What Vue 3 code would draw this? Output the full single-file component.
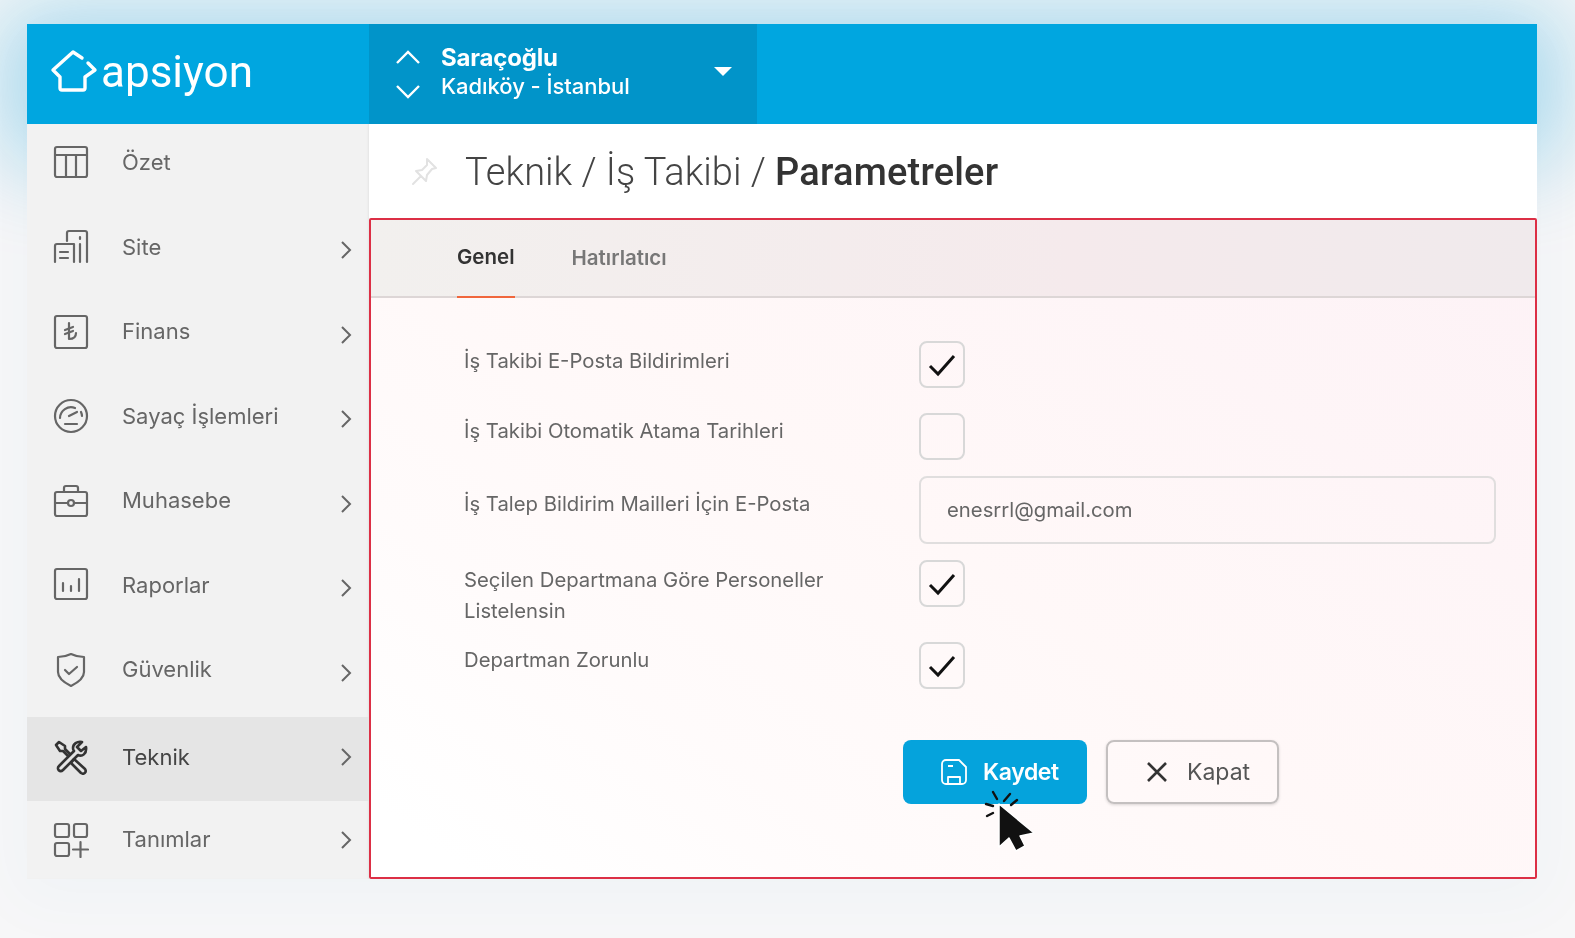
<template>
  <div class="page">
    <div class="frame">
      <header class="topbar">
        <div class="brand">
          <svg class="brand-icon" width="48" height="48" viewBox="0 0 48 48" fill="none" stroke="#fff" stroke-width="3.4" stroke-linejoin="round" stroke-linecap="round">
            <path d="M32 9l-9-6L3 21l7 7v11a2 2 0 0 0 2 2h21a2 2 0 0 0 2-2V28l10-7-7-7" />
          </svg>
          <span class="brand-name">apsiyon</span>
        </div>
        <div class="site-picker">
          <div class="picker-arrows">
            <svg width="26" height="16" viewBox="0 0 26 16" fill="none" stroke="#fff" stroke-width="2.4"><path d="M2 14L13 3l11 11" /></svg>
            <svg width="26" height="16" viewBox="0 0 26 16" fill="none" stroke="#fff" stroke-width="2.4"><path d="M2 2l11 11L24 2" /></svg>
          </div>
          <div class="picker-text">
            <div class="picker-name">Saraçoğlu</div>
            <div class="picker-place">Kadıköy - İstanbul</div>
          </div>
          <span class="picker-caret"></span>
        </div>
      </header>

      <div class="body">
        <nav class="sidebar">
          <a v-for="item in menu" :key="item.label" class="nav-item" :class="item.cls">
            <svg class="nav-icon" width="36" height="36" viewBox="0 0 36 36" fill="none" stroke-width="2.2" stroke-linecap="round" stroke-linejoin="round">
              <path v-for="(d, i) in item.paths" :key="i" :d="d" />
            </svg>
            <span class="nav-label">{{ item.label }}</span>
            <svg v-if="item.arrow" class="nav-chevron" width="12" height="20" viewBox="0 0 12 20" fill="none" stroke="#666" stroke-width="2"><path d="M2 2l8 8-8 8" /></svg>
          </a>
        </nav>

        <main class="content">
          <div class="page-title">
            <svg class="pin" width="30" height="30" viewBox="0 0 30 30" fill="none" stroke="#e2e2e2" stroke-width="2" stroke-linejoin="round"><path d="M18 3l9 9-4 1-5 6-1 6-5-5-8 8 8-8-5-5 6-1 5-5z" /></svg>
            <h1>Teknik / İş Takibi / <b>Parametreler</b></h1>
          </div>

          <section class="panel">
            <div class="tabs">
              <span class="tab active">Genel</span>
              <span class="tab">Hatırlatıcı</span>
            </div>

            <div class="form">
              <div v-for="row in rows" :key="row.label" class="row" :class="row.cls">
                <label class="row-label">{{ row.label }}</label>
                <input v-if="row.value" class="text-input" type="text" :value="row.value" readonly />
                <span v-else class="check">
                  <svg v-if="row.checked" width="28" height="24" viewBox="0 0 28 24" fill="none" stroke="#111" stroke-width="3"><path d="M2 13l8 8L26 3" /></svg>
                </span>
              </div>

              <div class="actions">
                <button class="btn btn-save">
                  <svg width="26" height="26" viewBox="0 0 26 26" fill="none" stroke="#fff" stroke-width="1.8" stroke-linejoin="round">
                    <path d="M5 1h13l7 7v13a4 4 0 0 1-4 4H5a4 4 0 0 1-4-4V5a4 4 0 0 1 4-4z" />
                    <path d="M7 25v-7h12v7M7 7h5" />
                  </svg>
                  Kaydet
                </button>
                <button class="btn btn-close">
                  <svg width="20" height="20" viewBox="0 0 20 20" fill="none" stroke="#333" stroke-width="2.6"><path d="M1 1l18 18M19 1L1 19" /></svg>
                  Kapat
                </button>
                <svg class="cursor" width="64" height="68" viewBox="0 0 64 68" fill="none">
                  <g stroke="#111" stroke-width="2.4" stroke-linecap="round">
                    <path d="M18 3l4 7M35 5l-6 7M42 11l-6 5M11 15l7 2M12 27l6-3" />
                  </g>
                  <path d="M24 15l35 29-14 3 5 10-9 5-7-13-10 9z" fill="#111" stroke="#fff" stroke-width="1.5" stroke-linejoin="round" />
                </svg>
              </div>
            </div>
          </section>
        </main>
      </div>
    </div>
  </div>
</template>

<script setup>
const menu = [
  {
    label: 'Özet',
    cls: 'first',
    arrow: false,
    paths: ['M4 3h28a2 2 0 0 1 2 2v26a2 2 0 0 1-2 2H4a2 2 0 0 1-2-2V5a2 2 0 0 1 2-2z', 'M2 11h32M13 11v22M23 11v22'],
  },
  {
    label: 'Site',
    arrow: true,
    paths: ['M2 33V17a2 2 0 0 1 2-2h17v18', 'M14 12V4a2 2 0 0 1 2-2h16a2 2 0 0 1 2 2v29', 'M7 23h8M7 29h8', 'M27 8v2M27 15v18'],
  },
  {
    label: 'Finans',
    arrow: true,
    paths: ['M4 2h28a2 2 0 0 1 2 2v28a2 2 0 0 1-2 2H4a2 2 0 0 1-2-2V4a2 2 0 0 1 2-2z', 'M16 9v16c4 0 7-2 7-6', 'M12 16l8-3M12 20l8-3'],
  },
  {
    label: 'Sayaç İşlemleri',
    arrow: true,
    paths: [
      'M18 2a16 16 0 1 1 0 32 16 16 0 0 1 0-32z',
      'M7 20a11 11 0 0 1 15-10',
      'M16 18l8-4',
      'M12 26h12',
      'M29 18a11 11 0 0 0-1-4',
    ],
  },
  {
    label: 'Muhasebe',
    arrow: true,
    paths: [
      'M4 9h28a2 2 0 0 1 2 2v20a2 2 0 0 1-2 2H4a2 2 0 0 1-2-2V11a2 2 0 0 1 2-2z',
      'M11 9V5a2 2 0 0 1 2-2h10a2 2 0 0 1 2 2v4',
      'M2 20h13M21 20h13',
      'M18 17a3 3 0 1 1 0 6 3 3 0 0 1 0-6z',
    ],
  },
  {
    label: 'Raporlar',
    arrow: true,
    paths: ['M4 2h28a2 2 0 0 1 2 2v26a2 2 0 0 1-2 2H4a2 2 0 0 1-2-2V4a2 2 0 0 1 2-2z', 'M10 24v-8M18 24v-5M26 24V12'],
  },
  {
    label: 'Güvenlik',
    cls: 'tall',
    arrow: true,
    paths: ['M18 2c4 2 8 3 13 3v15c0 7-7 11-13 14C12 31 5 27 5 20V5c5 0 9-1 13-3z', 'M12 18l4 4 8-7'],
  },
  {
    label: 'Teknik',
    cls: 'active',
    arrow: true,
    paths: [
      'M33 8l-5 4-4-4 5-5c-5-1-9 2-9 6 0 1 0 2 1 3L6 27c-3 3 1 7 4 4l15-15c4 2 9-1 8-8z',
      'M3 6l3-3 6 4v3l5 5-2 2-5-5H7z',
      'M21 20l11 10c2 3-1 6-4 4L18 24z',
    ],
  },
  {
    label: 'Tanımlar',
    cls: 'last',
    arrow: true,
    paths: [
      'M4 2h10a2 2 0 0 1 2 2v9a2 2 0 0 1-2 2H4a2 2 0 0 1-2-2V4a2 2 0 0 1 2-2z',
      'M23 2h9a2 2 0 0 1 2 2v9a2 2 0 0 1-2 2h-9a2 2 0 0 1-2-2V4a2 2 0 0 1 2-2z',
      'M4 21h10a2 2 0 0 1 2 2v9a2 2 0 0 1-2 2H4a2 2 0 0 1-2-2v-9a2 2 0 0 1 2-2z',
      'M27.5 20v15M20 27.5h15',
    ],
  },
]

const rows = [
  { label: 'İş Takibi E-Posta Bildirimleri', checked: true, cls: 'row-wide' },
  { label: 'İş Takibi Otomatik Atama Tarihleri', checked: false },
  { label: 'İş Talep Bildirim Mailleri İçin E-Posta', value: 'enesrrl@gmail.com', cls: 'row-input' },
  { label: 'Seçilen Departmana Göre Personeller Listelensin', checked: true, cls: 'row-low' },
  { label: 'Departman Zorunlu', checked: true },
]
</script>

<style scoped>
.page {
  width: 1575px;
  height: 938px;
  padding: 24px 38px 0 27px;
  box-sizing: border-box;
  overflow: hidden;
  background: #f7f7f8;
  font-family: Inter, "Liberation Sans", sans-serif;
}
.frame {
  height: 855px;
  display: flex;
  flex-direction: column;
  filter: blur(0.65px);
  box-shadow: 0 10px 60px 14px rgba(0, 120, 180, 0.03);
}
.topbar {
  height: 100px;
  flex: none;
  display: flex;
  background: #00a6e0;
  box-shadow: 0 10px 90px 30px rgba(0, 160, 220, 0.3);
}
.brand {
  width: 342px;
  display: flex;
  align-items: center;
  padding-left: 23px;
  box-sizing: border-box;
  color: #fff;
}
.brand-icon {
  margin-top: -2px;
}
.brand-name {
  margin-left: 3px;
  font-family: Roboto, sans-serif;
  font-weight: 400;
  font-size: 44px;
  margin-top: -4px;
}
.site-picker {
  width: 388px;
  display: flex;
  align-items: center;
  background: #0194c9;
  color: #fff;
  padding-left: 26px;
  box-sizing: border-box;
}
.picker-arrows {
  width: 26px;
  display: flex;
  flex-direction: column;
  gap: 19px;
}
.picker-text {
  margin-left: 20px;
  width: 273px;
  margin-top: -4px;
}
.picker-name {
  font-size: 24px;
  font-weight: 700;
  letter-spacing: -0.2px;
  line-height: 28px;
}
.picker-place {
  font-size: 22px;
  font-weight: 500;
  letter-spacing: -0.05px;
  line-height: 28px;
}
.picker-caret {
  border-left: 9px solid transparent;
  border-right: 9px solid transparent;
  border-top: 9px solid #fff;
  margin-top: -6px;
}
.body {
  flex: 1;
  display: flex;
  position: relative;
  min-height: 0;
}
.sidebar {
  width: 342px;
  flex: none;
  background: #f2f2f2;
  box-shadow: inset -2px 0 2px -1px #e4e4e4;
}
.nav-item {
  display: flex;
  align-items: center;
  height: 84.5px;
  padding: 10px 17px 0 26px;
  box-sizing: border-box;
  color: #666;
  font-size: 22px;
}
.nav-item.first {
  height: 76px;
  padding-top: 0;
}
.nav-item.tall {
  height: 94.5px;
  padding-top: 0;
}
.nav-item.active {
  height: 84px;
  padding-top: 0;
  padding-bottom: 4px;
  background: #e5e5e5;
  color: #444;
}
.nav-item.last {
  height: 77px;
  padding-top: 0;
  padding-bottom: 0;
}
.nav-icon {
  flex: none;
  stroke: #666;
}
.nav-item.active .nav-icon {
  stroke: #333;
  stroke-width: 2.6;
}
.nav-label {
  margin-left: 33px;
  flex: 1;
  margin-top: -1px;
}
.nav-chevron {
  margin-top: 6px;
}
.nav-item.active .nav-chevron,
.nav-item.last .nav-chevron {
  margin-top: 0;
}
.content {
  flex: 1;
  min-width: 0;
  display: flex;
  flex-direction: column;
  background: #fff;
}
.page-title {
  height: 94px;
  flex: none;
  display: flex;
  align-items: center;
  padding-left: 40px;
}
.page-title h1 {
  margin: 1px 0 0 26px;
  font-family: Roboto, sans-serif;
  font-weight: 300;
  font-size: 38px;
  color: #444;
}
.page-title b {
  font-weight: 500;
  letter-spacing: 0.2px;
  color: #333;
}
.panel {
  flex: 1;
  display: flex;
  flex-direction: column;
  border: 2px solid #dc2f45;
  border-radius: 2px;
  background: linear-gradient(215deg, #fdf2f6 0%, #fff8f8 50%, #fffbfb 75%, #fff 95%);
}
.tabs {
  height: 78px;
  flex: none;
  display: flex;
  gap: 57px;
  padding-left: 86px;
  background: linear-gradient(90deg, #f2f0ee 0%, #f5eaec 60%, #f0eaec 100%);
  border-bottom: 2px solid #ddd6d6;
  box-sizing: border-box;
}
.tab {
  display: flex;
  align-items: center;
  height: 78px;
  padding-bottom: 4px;
  box-sizing: border-box;
  font-size: 20.5px;
  font-weight: 600;
  color: #777;
}
.tab.active {
  color: #333;
  border-bottom: 2px solid #f0663c;
}
.form {
  padding: 43px 39px 0 93px;
}
.row {
  display: grid;
  grid-template-columns: 455px 1fr;
  align-items: start;
  margin-bottom: 16px;
}
.row-wide {
  margin-bottom: 25px;
}
.row-label {
  padding-top: 2px;
  padding-right: 60px;
  font-size: 20.3px;
  line-height: 31px;
  color: #666;
}
.row-wide .row-label,
.row-low .row-label {
  padding-top: 4px;
}
.row-input .row-label {
  padding-top: 12px;
}
.check {
  width: 46px;
  height: 47px;
  box-sizing: border-box;
  display: flex;
  align-items: center;
  justify-content: center;
  border: 2px solid #d8d8d8;
  border-radius: 8px;
}
.text-input {
  height: 68px;
  box-sizing: border-box;
  width: 100%;
  border: 2px solid #e0dede;
  border-radius: 8px;
  padding: 0 26px 2px;
  font: 20.3px Inter, "Liberation Sans", sans-serif;
  color: #666;
  background: transparent;
  outline: none;
}
.actions {
  position: relative;
  display: flex;
  gap: 19px;
  margin: 51px 0 0 439px;
}
.btn {
  height: 64px;
  display: flex;
  align-items: center;
  box-sizing: border-box;
  border-radius: 8px;
  font-family: Inter, "Liberation Sans", sans-serif;
  font-size: 23px;
}
.btn-save {
  width: 184px;
  padding-left: 38px;
  gap: 16px;
  border: none;
  background: #05a3dc;
  color: #fff;
  font-weight: 600;
  letter-spacing: -0.4px;
}
.btn-close {
  width: 173px;
  padding-left: 39px;
  gap: 20px;
  border: 2px solid #c4c0c0;
  background: transparent;
  color: #555;
  box-shadow: 0 1px 3px rgba(0, 0, 0, 0.15);
}
.cursor {
  position: absolute;
  left: 72px;
  top: 49px;
}
</style>

<style>
html,
body {
  margin: 0;
  background: #f7f7f8;
}
</style>
